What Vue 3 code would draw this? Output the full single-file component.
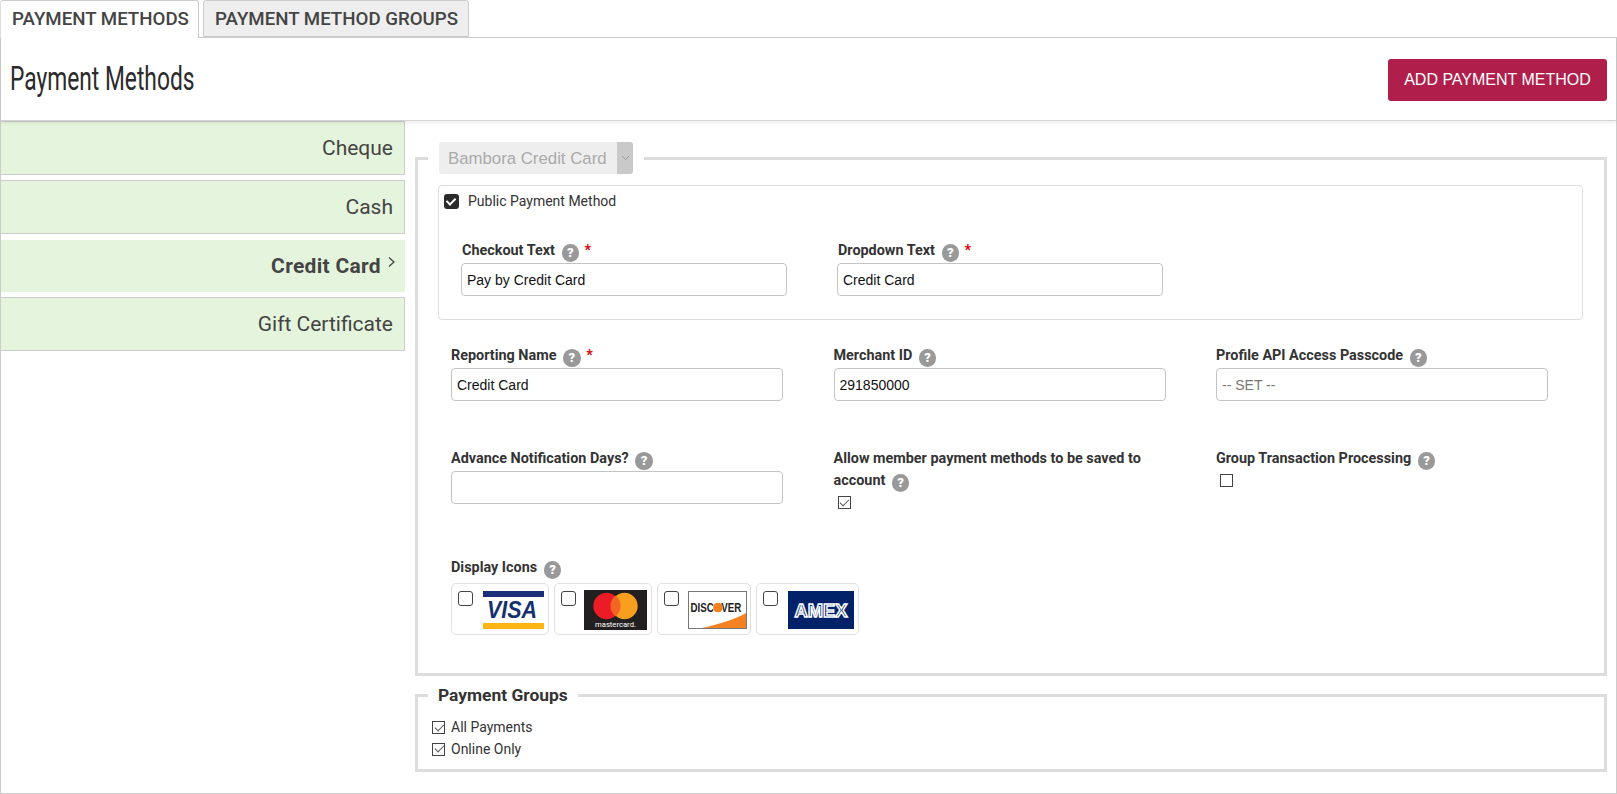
<script setup>
const items = [
  { name: 'Cheque' },
  { name: 'Cash' },
  { name: 'Credit Card', active: true },
  { name: 'Gift Certificate' },
]
</script>

<template>
  <div class="page">
    <div class="tabs">
      <div class="tab active">PAYMENT METHODS</div>
      <div class="tab">PAYMENT METHOD GROUPS</div>
    </div>
    <div class="panel">
      <header class="head">
        <h1><span>Payment Methods</span></h1>
        <button class="add">ADD PAYMENT METHOD</button>
      </header>
      <div class="main">
        <nav class="side">
          <div v-for="it in items" :key="it.name" class="item" :class="{ on: it.active }">
            <span>{{ it.name }}</span>
            <svg v-if="it.active" class="chev" width="9" height="12" viewBox="0 0 9 12"><path d="M2 1.5 7 6 2 10.5" fill="none" stroke="#444" stroke-width="1.3"/></svg>
          </div>
        </nav>
        <div class="content">
          <fieldset class="fs one">
            <legend class="lg">
              <div class="sel"><span>Bambora Credit Card</span><i><svg width="9" height="6" viewBox="0 0 9 6"><path d="M1 1 4.5 4.5 8 1" fill="none" stroke="#999" stroke-width="1"/></svg></i></div>
            </legend>
            <div class="inner">
              <label class="pub"><input type="checkbox" class="dark" checked>Public Payment Method</label>
              <div class="grid two">
                <div>
                  <div class="lab">Checkout Text <b class="q">?</b> <em>*</em></div>
                  <input class="tx" value="Pay by Credit Card">
                </div>
                <div>
                  <div class="lab">Dropdown Text <b class="q">?</b> <em>*</em></div>
                  <input class="tx" value="Credit Card">
                </div>
              </div>
            </div>
            <div class="grid three r2">
              <div>
                <div class="lab">Reporting Name <b class="q">?</b> <em>*</em></div>
                <input class="tx" value="Credit Card">
              </div>
              <div>
                <div class="lab">Merchant ID <b class="q">?</b></div>
                <input class="tx" value="291850000">
              </div>
              <div>
                <div class="lab">Profile API Access Passcode <b class="q">?</b></div>
                <input class="tx" placeholder="-- SET --">
              </div>
            </div>
            <div class="grid three r3">
              <div>
                <div class="lab">Advance Notification Days? <b class="q">?</b></div>
                <input class="tx">
              </div>
              <div>
                <div class="lab">Allow member payment methods to be saved to account <b class="q">?</b></div>
                <input type="checkbox" class="plain allow" checked>
              </div>
              <div>
                <div class="lab">Group Transaction Processing <b class="q">?</b></div>
                <input type="checkbox" class="plain group">
              </div>
            </div>
            <div class="lab di">Display Icons <b class="q">?</b></div>
            <div class="icons">
              <label class="ic w98a"><input type="checkbox" class="round">
                <svg width="61" height="38" viewBox="0 0 61 38">
                  <rect width="61" height="6" fill="#1a2f7a"/>
                  <rect y="32" width="61" height="6" fill="#fdb515"/>
                  <text x="4" y="27" font-family="Liberation Sans, sans-serif" font-size="23" font-weight="700" font-style="italic" fill="#14306f" textLength="50" lengthAdjust="spacingAndGlyphs">VISA</text>
                </svg>
              </label>
              <label class="ic w98"><input type="checkbox" class="round">
                <svg width="63" height="40" viewBox="0 0 63 40">
                  <rect width="63" height="40" fill="#231f20"/>
                  <circle cx="22.5" cy="16" r="13.2" fill="#eb1c26"/>
                  <circle cx="40.5" cy="16" r="13.2" fill="#f99f1f"/>
                  <path d="M31.5 5.6a13.2 13.2 0 0 1 0 20.8 13.2 13.2 0 0 1 0-20.8Z" fill="#f26522"/>
                  <text x="11" y="37" font-family="Roboto, sans-serif" font-size="8" fill="#fff" textLength="41" lengthAdjust="spacingAndGlyphs">mastercard.</text>
                </svg>
              </label>
              <label class="ic w95"><input type="checkbox" class="round">
                <svg width="59" height="38" viewBox="0 0 59 38">
                  <rect x=".5" y=".5" width="58" height="37" fill="#fff" stroke="#777"/>
                  <path d="M14 37 C32 33 48 28 58 22V37Z" fill="#f58220"/>
                  <text x="3.2" y="21" transform="scale(.78 1)" font-family="Liberation Sans, sans-serif" font-size="12.5" font-weight="700" fill="#222">DISCOVER</text>
                  <circle cx="30" cy="16.5" r="4.8" fill="#f58220"/>
                </svg>
              </label>
              <label class="ic w103"><input type="checkbox" class="round">
                <svg width="66" height="38" viewBox="0 0 66 38">
                  <rect width="66" height="38" fill="#012169"/>
                  <text x="6.5" y="26" font-family="Liberation Sans, sans-serif" font-size="19" font-weight="700" fill="#012169" stroke="#fff" stroke-width="1.5" textLength="53" lengthAdjust="spacingAndGlyphs">AMEX</text>
                </svg>
              </label>
            </div>
          </fieldset>
          <fieldset class="fs groups">
            <legend class="lg2">Payment Groups</legend>
            <label class="gr"><input type="checkbox" class="plain" checked>All Payments</label>
            <label class="gr"><input type="checkbox" class="plain" checked>Online Only</label>
          </fieldset>
        </div>
      </div>
    </div>
  </div>
</template>

<style>
html, body { overflow: hidden; background: #fff; }
</style>

<style scoped>
.page { width: 1617px; height: 794px; box-sizing: border-box; font-family: Roboto, "Liberation Sans", sans-serif; color: #333; font-size: 14px; }
.tabs { display: flex; height: 37px; gap: 4px; position: relative; z-index: 1; }
.tab { box-sizing: border-box; height: 37px; padding: 0 10px 0 11px; border: 1px solid #ccc; border-radius: 3px 3px 0 0; background: #eee; font-size: 18.7px; font-weight: 500; color: #444; line-height: 36px; white-space: nowrap; }
.tab.active { background: #fff; height: 38px; width: 199px; border-bottom: 0; border-left-color: #ddd; }
.panel { box-sizing: border-box; height: 757px; border: 1px solid #ccc; }
.head { box-sizing: border-box; height: 83px; display: flex; align-items: center; justify-content: space-between; padding: 0 9px 0 9px; border-bottom: 1px solid #d4d4d4; box-shadow: 0 2px 4px rgba(0,0,0,.08); position: relative; }
h1 { margin: 0; font-weight: 400; font-size: 33px; line-height: 40px; color: #2b2b2b; }
h1 span { display: inline-block; transform: scaleX(.69); transform-origin: left center; white-space: nowrap; }
.add { box-sizing: border-box; width: 219px; height: 42px; border: 0; border-radius: 3px; background: #b01f4b; color: #fff; font: 16px "Liberation Sans", sans-serif; padding: 0; margin-top: 1px; }
.main { display: flex; }
.side { width: 404px; flex: none; display: flex; flex-direction: column; }
.item { box-sizing: border-box; height: 54px; margin-bottom: 5px; display: flex; align-items: center; justify-content: flex-end; padding-right: 11px; background: #e5f4dc; border: 1px solid #ccc; border-left: 0; font-size: 21px; color: #444; }
.item.on { font-weight: 700; letter-spacing: .3px; padding-right: 9px; height: 52px; margin-top: 1px; border: 0; }
.chev { margin: -8px 0 0 6px; }
.content { flex: 1; min-width: 0; padding: 21px 9px 0 10px; }
.fs { margin: 0; min-width: 0; border: 3px solid #ddd; }
.one { padding: 0 20px 37px 33px; height: 534px; box-sizing: border-box; }
.lg { margin-left: -23px; padding: 0 11px; height: 32px; }
.sel { width: 194px; height: 32px; display: flex; background: #eee; border-radius: 3px; color: #aaa; font: 16.8px/33px "Liberation Sans", sans-serif; box-sizing: border-box; padding-left: 9px; justify-content: space-between; }
.sel span { white-space: nowrap; }
.sel i { width: 16px; background: #c9c9c9; border-radius: 0 3px 3px 0; display: flex; align-items: center; justify-content: center; }
.inner { box-sizing: border-box; height: 135px; width: 1145px; margin: 11px 0 0 -13px; border: 1px solid #ddd; border-radius: 4px; padding: 7px 0 0 5px; position: relative; }
.pub { display: flex; align-items: center; gap: 9px; line-height: 16px; height: 16px; color: #333; }
.two { grid-template-columns: repeat(2, 326px); column-gap: 50px; margin: 30px 0 0 17px; }
.two .lab { margin-left: 1px; }
.grid { display: grid; }
.three { grid-template-columns: repeat(3, 332.5px); column-gap: 50px; }
.r2 { margin-top: 24px; }
.r3 { margin-top: 46px; height: 65px; }
.lab { font-weight: 700; font-size: 14.4px; line-height: 22px; color: #333; padding-top: 1px; margin-bottom: 1px; }
.q { display: inline-block; width: 17.5px; height: 17.5px; margin: -4px 2px -4px 3px; border-radius: 50%; background: #999; color: #fff; font-size: 13px; line-height: 17.5px; text-align: center; vertical-align: -2px; }
em { color: #d00; font-style: normal; font-weight: 700; }
.tx { display: block; box-sizing: border-box; width: 332px; height: 33px; border: 1px solid #c4c4c4; border-radius: 4px; padding: 0 5px; font: 14px "Liberation Sans", sans-serif; color: #111; outline: 0; background: #fff; }
.two .tx { width: 326px; }
.tx::placeholder { color: #777; opacity: 1; }
input[type=checkbox] { appearance: none; margin: 0; flex: none; position: relative; box-sizing: border-box; display: block; }
.dark { width: 15px; height: 15px; border-radius: 3px; background: #2b2b2b; }
.dark::after { content: ""; position: absolute; left: 4px; top: 2px; width: 4px; height: 7px; border: solid #fff; border-width: 0 2.4px 2.4px 0; transform: rotate(45deg); }
.plain { width: 13px; height: 13px; border: 1px solid #444; background: #fff; }
.plain:checked::after { content: ""; position: absolute; left: 3.5px; top: -.5px; width: 4px; height: 8px; border: solid #555; border-width: 0 1px 1px 0; transform: rotate(45deg); }
.allow { margin: 4px 0 0 4px !important; }
.group { margin: 4px 0 0 4px !important; }
.di { margin: 44px 0 4px; }
.icons { display: flex; gap: 5px; height: 52px; }
.ic { box-sizing: border-box; height: 52px; display: flex; align-items: flex-start; border: 1px solid #e0e0e0; border-radius: 5px; padding: 7px 0 0 6px; }
.w98a { width: 98px; } .w98 { width: 98px; } .w95 { width: 94px; } .w103 { width: 103px; }
.ic svg { display: block; flex: none; }
.round { width: 15px; height: 15px; border: 1px solid #444; border-radius: 3px; background: #fff; }
.w98a svg { margin-left: 10px; }
.w98 svg { margin: -1px 0 0 8px; }
.w95 svg { margin-left: 9px; }
.w103 svg { margin-left: 10px; }
.groups { margin-top: 9px; height: 87px; box-sizing: border-box; padding: 11px 0 0 14px; }
.lg2 { margin-left: -4px; padding: 0 10px; font-size: 17.4px; font-weight: 700; line-height: 21px; color: #333; }
.gr { display: flex; align-items: center; gap: 6px; line-height: 21.5px; height: 21.5px; }
</style>
